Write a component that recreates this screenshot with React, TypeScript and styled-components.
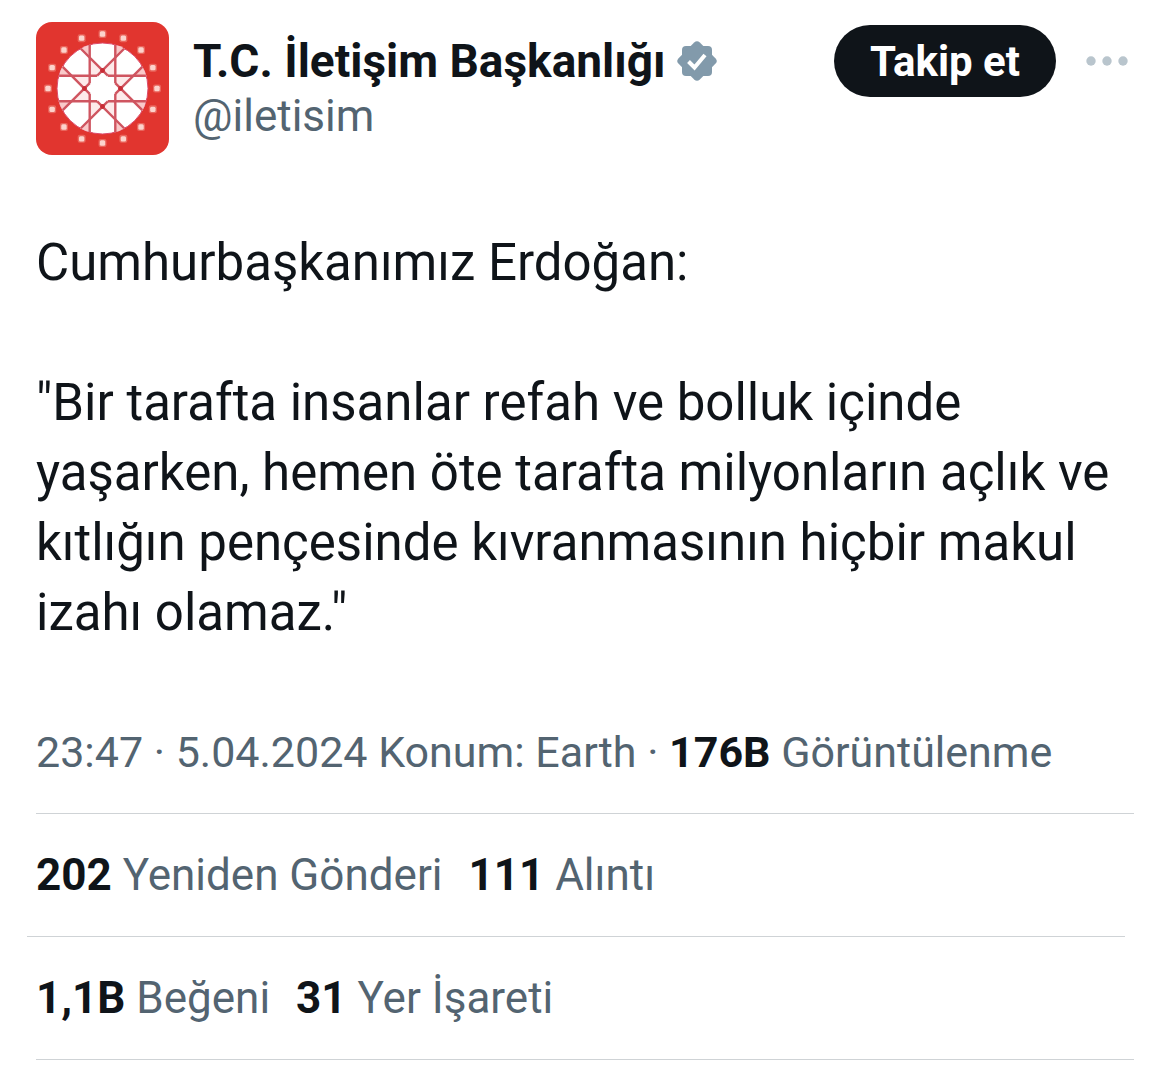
import React from "react";
import styled, { createGlobalStyle } from "styled-components";

const GlobalStyle = createGlobalStyle`
  * { box-sizing: border-box; }
  body {
    margin: 0;
    background: #fff;
    color: #0f1419;
    font-family: Roboto, "Noto Sans", sans-serif;
  }
`;

const Post = styled.article`
  padding: 22px 36px 15px;
`;

const Header = styled.header`
  display: flex;
  align-items: flex-start;
  gap: 24px;
`;

const AvatarLink = styled.a`
  display: block;
  flex: none;
  width: 133px;
  height: 133px;
  border-radius: 16px;
  overflow: hidden;
`;

const Author = styled.div`
  flex: 1;
  min-width: 0;
  padding-top: 12px;
`;

const NameRow = styled.div`
  display: flex;
  align-items: center;
  gap: 10px;
  line-height: 54px;
`;

const Name = styled.a`
  color: #0f1419;
  font-size: 46px;
  font-weight: 700;
  text-decoration: none;
  white-space: nowrap;
`;

const Handle = styled.a`
  display: block;
  color: #536471;
  font-size: 44px;
  line-height: 56px;
  text-decoration: none;
`;

const Actions = styled.div`
  display: flex;
  align-items: center;
  gap: 26px;
  padding-top: 3px;
`;

const FollowButton = styled.button`
  height: 72px;
  padding: 0 36px;
  border: 0;
  border-radius: 36px;
  background: #0f1419;
  color: #fff;
  font-family: inherit;
  font-size: 42px;
  font-weight: 700;
  white-space: nowrap;
`;

const MoreButton = styled.button`
  display: flex;
  padding: 0;
  border: 0;
  background: none;
`;

const Body = styled.div`
  padding: 73px 0 43px;
  font-size: 51px;
  line-height: 70px;
`;

const Paragraph = styled.p`
  margin: 0;
  & + & { margin-top: 70px; }
`;

const Row = styled.div<{ $size?: number }>`
  display: flex;
  align-items: center;
  gap: 26px;
  height: 122px;
  color: #536471;
  font-size: ${(p) => p.$size ?? 44}px;
  line-height: 54px;
  white-space: nowrap;
`;

const Rule = styled.hr<{ $shifted?: boolean }>`
  height: 1px;
  margin: ${(p) => (p.$shifted ? "0 9px 0 -9px" : "0")};
  border: 0;
  background: #cfd3d6;
`;

const Strong = styled.strong`
  color: #0f1419;
  font-weight: 700;
`;

const TURNS = [0, 45, 90, 135, 180, 225, 270, 315];
const DOTS = Array.from({ length: 16 }, (_, i) => (i * Math.PI) / 8);

function Emblem() {
  return (
    <svg width="133" height="133" viewBox="-66.5 -66.5 133 133" role="img" aria-label="T.C. İletişim Başkanlığı">
      <rect x="-66.5" y="-66.5" width="133" height="133" fill="#e1352f" />
      <circle r="45.5" fill="#fff" stroke="#dd4a6a" strokeWidth="1" />
      {TURNS.map((t) => (
        <g key={t} transform={`rotate(${t})`}>
          <path d="M12.8 -30.8V-43.4Q18 -42.5 22.2 -39.8Z" fill="#f9c9c9" />
          <path d="M0 -18L12.8 -30.8V-12.8H5.3Z" fill="#fdeaea" />
        </g>
      ))}
      {TURNS.map((t) => (
        <path
          key={t}
          d="M12.8 -43.4V-5.3M12.8 5.3V43.4"
          stroke="#cf5560"
          strokeWidth="2.4"
          transform={`rotate(${t})`}
        />
      ))}
      {TURNS.filter((t) => t % 90 === 0).map((t) => (
        <circle key={t} cy="-18" r="2.4" fill="#c92c35" transform={`rotate(${t})`} />
      ))}
      {DOTS.map((a) => (
        <g key={a} transform={`translate(${54.5 * Math.sin(a)} ${-54.5 * Math.cos(a)})`}>
          <rect x="-4" y="-4" width="8" height="8" rx="2" fill="#ea655c" />
          <rect x="-2.7" y="-2.7" width="5.4" height="5.4" rx="1.5" fill="#fcd3cc" />
        </g>
      ))}
    </svg>
  );
}

function VerifiedBadge() {
  return (
    <svg width="42" height="42" viewBox="-21 -21 42 42" role="img" aria-label="Onaylı hesap">
      <g fill="#829aab">
        <rect x="-15" y="-15" width="30" height="30" rx="4" />
        <rect x="-15" y="-15" width="30" height="30" rx="4" transform="rotate(45)" />
      </g>
      <path d="M-8.5 .5L-2.5 6.5L8 -6" fill="none" stroke="#fff" strokeWidth="4" />
    </svg>
  );
}

export default function App() {
  return (
    <>
      <GlobalStyle />
      <Post lang="tr">
        <Header>
          <AvatarLink href="#"><Emblem /></AvatarLink>
          <Author>
            <NameRow>
              <Name href="#">T.C. İletişim Başkanlığı</Name>
              <VerifiedBadge />
            </NameRow>
            <Handle href="#">@iletisim</Handle>
          </Author>
          <Actions>
            <FollowButton type="button">Takip et</FollowButton>
            <MoreButton type="button" aria-label="Daha fazla">
              <svg width="52" height="20" viewBox="0 0 52 20" fill="#b9c5cd">
                <circle cx="9" cy="10" r="4.7" />
                <circle cx="25" cy="10" r="4.7" />
                <circle cx="41" cy="10" r="4.7" />
              </svg>
            </MoreButton>
          </Actions>
        </Header>
        <Body>
          <Paragraph>Cumhurbaşkanımız Erdoğan:</Paragraph>
          <Paragraph>
            "Bir tarafta insanlar refah ve bolluk içinde yaşarken, hemen öte tarafta milyonların açlık ve
            kıtlığın pençesinde kıvranmasının hiçbir makul izahı olamaz."
          </Paragraph>
        </Body>
        <Row $size={43}>
          <span>23:47 · 5.04.2024 Konum: Earth · <Strong>176B</Strong> Görüntülenme</span>
        </Row>
        <Rule />
        <Row>
          <span><Strong>202</Strong> Yeniden Gönderi</span>
          <span><Strong>111</Strong> Alıntı</span>
        </Row>
        <Rule $shifted />
        <Row>
          <span><Strong>1,1B</Strong> Beğeni</span>
          <span><Strong>31</Strong> Yer İşareti</span>
        </Row>
        <Rule />
      </Post>
    </>
  );
}
